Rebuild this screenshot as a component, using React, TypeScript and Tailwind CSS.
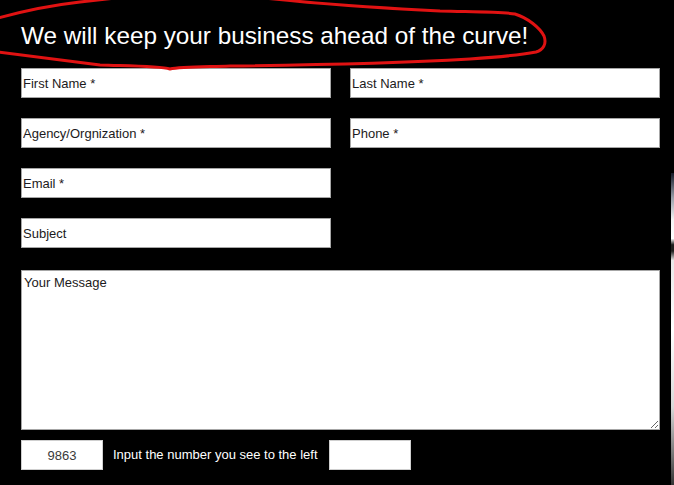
import React from "react";

const inputCls =
  "h-[30px] w-[310px] border border-[#a6a6a6] bg-white px-[1px] text-[13px] text-[#1c1a20] placeholder:text-[#1c1a20] outline-none font-['Liberation_Sans',Arial,sans-serif]";

export default function App() {
  return (
    <div className="relative flex min-h-[485px] w-[674px] overflow-hidden bg-black font-['Liberation_Sans',Arial,sans-serif]">
      <div className="flex-1 pl-[21px] pt-[22px]">
        <h1 className="text-[24.3px] leading-[28px] text-white">
          We will keep your business ahead of the curve!
        </h1>
        <div className="mt-[18px] grid grid-cols-[310px_310px] gap-x-[19px] gap-y-[20px]">
          <input className={inputCls} placeholder="First Name *" />
          <input className={inputCls} placeholder="Last Name *" />
          <input className={inputCls} placeholder="Agency/Orgnization *" />
          <input className={inputCls} placeholder="Phone *" />
          <input className={`${inputCls} col-start-1`} placeholder="Email *" />
          <input className={`${inputCls} col-start-1`} placeholder="Subject" />
        </div>
        <textarea
          className="mt-[22px] block h-[160px] w-[639px] border border-[#a6a6a6] bg-white px-[2px] pt-[4px] pb-[2px] text-[13px] leading-[15px] text-[#1c1a20] placeholder:text-[#1c1a20] outline-none font-['Liberation_Sans',Arial,sans-serif]"
          placeholder="Your Message"
        />
        <div className="mt-[10px] flex items-center">
          <div className="flex h-[30px] w-[82px] items-center justify-center border border-[#cfcfcf] bg-white pt-[1px] text-[13px] text-[#3a3a3a]">
            9863
          </div>
          <span className="ml-[10px] text-[13px] text-white">
            Input the number you see to the left
          </span>
          <input className="ml-[11px] h-[30px] w-[82px] border border-[#cfcfcf] bg-white px-[2px] text-[13px] outline-none" />
        </div>
      </div>
      <div className="mt-[173px] w-[3px] bg-[linear-gradient(to_bottom,#151a28_0%,#9aa0aa_8%,#f4f4f4_15%,#ffffff_21%,#1e1e1e_23%,#1e1e1e_25%,#e8e8e8_28%,#ffffff_50%,#d8d8d8_75%,#777_90%,#333_100%)]" />
      <svg
        className="pointer-events-none absolute left-0 top-0"
        width="674"
        height="80"
        viewBox="0 0 674 80"
        fill="none"
      >
        <path
          d="M -2 18 C 20 12, 45 6, 80 2 S 115 -2 125 -3 M 255 -3 C 300 2, 380 8, 440 11 C 480 12, 505 12, 515 14 C 528 18, 540 28, 544 36 C 547 44, 543 50, 536 52 C 520 55, 500 57, 470 59 C 400 63, 320 65, 230 66 C 200 67, 180 67, 170 69 C 160 66, 130 66, 100 65 C 60 60, 20 55, -2 52"
          stroke="#e01212"
          strokeWidth="3"
          strokeLinecap="round"
          strokeLinejoin="round"
        />
      </svg>
    </div>
  );
}
